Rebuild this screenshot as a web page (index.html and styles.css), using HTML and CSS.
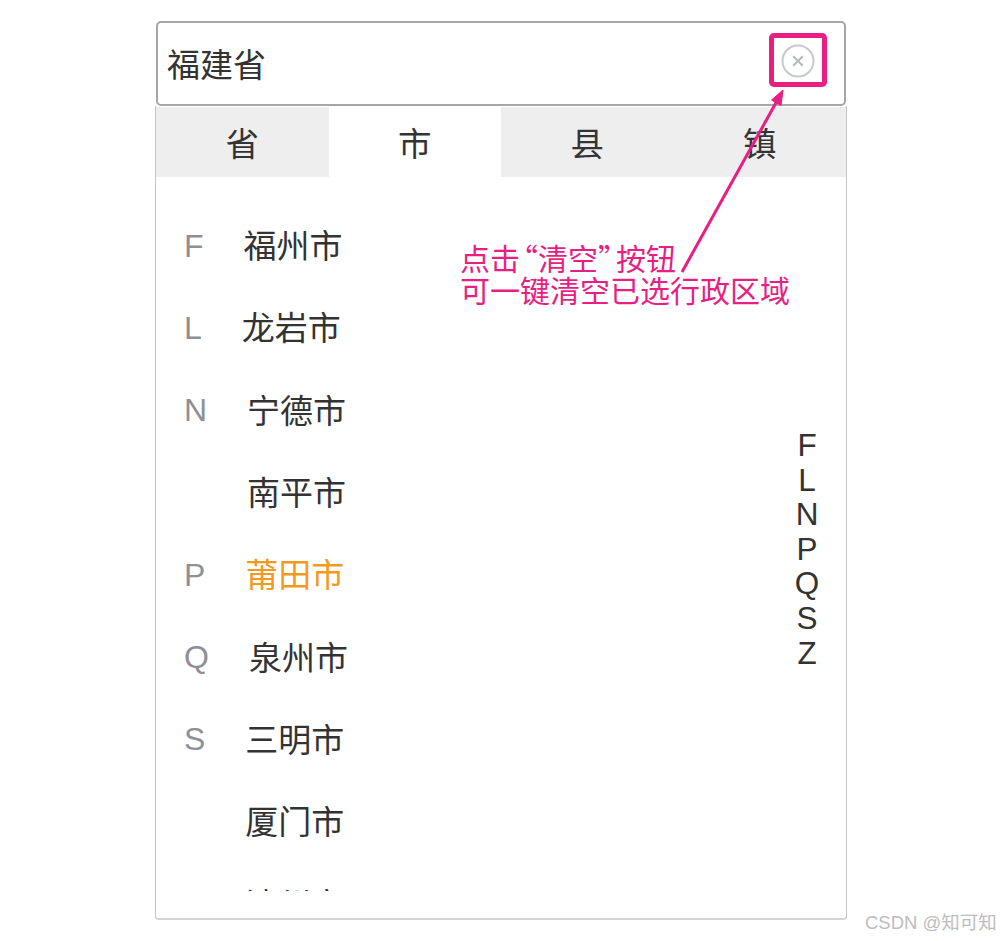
FILE: index.html
```html
<!DOCTYPE html>
<html lang="zh-CN">
<head>
<meta charset="utf-8">
<title>行政区域选择</title>
<link rel="stylesheet" href="styles.css">
</head>
<body>
<main class="stage">
  <div class="field">
    <span class="field-value">福建省</span>
    <svg class="clear-icon" width="36" height="36" viewBox="0 0 36 36" aria-hidden="true">
      <circle cx="18" cy="18" r="15.5" fill="none" stroke="#c6c9d1" stroke-width="2"/>
      <path d="M13.2 13.2 22.8 22.8M22.8 13.2 13.2 22.8" fill="none" stroke="#b4b8c1" stroke-width="2"/>
    </svg>
  </div>
  <section class="panel">
    <div class="tabs">
      <div class="tab">省</div>
      <div class="tab tab-active">市</div>
      <div class="tab">县</div>
      <div class="tab">镇</div>
    </div>
    <div class="list">
      <div class="row"><span class="letter">F</span><span class="city">福州市</span></div>
      <div class="row"><span class="letter">L</span><span class="city">龙岩市</span></div>
      <div class="row"><span class="letter">N</span><span class="city">宁德市</span></div>
      <div class="row"><span class="letter letter-hidden">N</span><span class="city">南平市</span></div>
      <div class="row"><span class="letter">P</span><span class="city city-current">莆田市</span></div>
      <div class="row"><span class="letter">Q</span><span class="city">泉州市</span></div>
      <div class="row"><span class="letter">S</span><span class="city">三明市</span></div>
      <div class="row"><span class="letter letter-hidden">S</span><span class="city">厦门市</span></div>
      <div class="row"><span class="letter letter-hidden">S</span><span class="city">漳州市</span></div>
    </div>
    <div class="index-bar">
      <span>F</span><span>L</span><span>N</span><span>P</span><span>Q</span><span>S</span><span>Z</span>
    </div>
  </section>
  <svg class="callout" width="1000" height="941" viewBox="0 0 1000 941" aria-hidden="true">
    <rect x="771.5" y="35.5" width="53" height="49" rx="2.5" fill="none" stroke="#e91e82" stroke-width="5"/>
    <path d="M682 272 777.5 100" fill="none" stroke="#e91e82" stroke-width="3"/>
    <path d="M783 90 771.5 100 781 105.5 Z" fill="#e91e82" stroke="#e91e82" stroke-width="1"/>
  </svg>
  <p class="note"><span>点击<span class="quote-open">“</span>清空<span class="quote-close">”</span>按钮</span><span>可一键清空已选行政区域</span></p>
  <div class="watermark">CSDN @知可知</div>
</main>
</body>
</html>
```

FILE: styles.css
```css
* { box-sizing: border-box; }
html, body { margin: 0; background: #fff; }
body {
  font-family: "Liberation Sans", "Noto Sans CJK SC", sans-serif;
  color: #333;
}
.stage {
  position: relative;
  width: 1000px;
  height: 941px;
  padding: 21px 153px 0 155px;
  overflow: hidden;
}
.field {
  display: flex;
  align-items: center;
  justify-content: space-between;
  height: 85px;
  margin: 0 1px;
  padding: 0 28px 2px 9px;
  border: 2px solid #a6a6a6;
  border-radius: 5px;
  background: #fff;
  font-size: 33px;
}
.clear-icon { margin-bottom: 3px; }
.panel {
  position: relative;
  height: 814px;
  border: 1px solid #c4c4c4;
  border-top: 0;
  border-bottom: 2px solid #d4d4d4;
  border-radius: 0 0 4px 4px;
  padding-top: 1px;
}
.tabs {
  display: grid;
  grid-template-columns: repeat(4, 1fr);
  height: 70px;
  background: #eee;
}
.tab {
  display: flex;
  align-items: center;
  justify-content: center;
  padding-bottom: 1px;
  font-size: 33.5px;
}
.tab-active { background: #fff; }
.list {
  height: 713.5px;
  padding-top: 28px;
  overflow: hidden;
}
.row {
  display: flex;
  align-items: center;
  height: 82.3px;
  padding-left: 28px;
  font-size: 33px;
}
.letter {
  margin-right: 40px;
  color: #8f8f98;
  font-size: 32px;
}
.letter-hidden { visibility: hidden; }
.city {
  margin-bottom: 4px;
  color: #333;
}
.city-current { color: #f19a1f; }
.index-bar {
  position: absolute;
  top: 322px;
  right: 19px;
  width: 40px;
  display: flex;
  flex-direction: column;
  align-items: center;
  font-size: 31.5px;
  line-height: 34.6px;
  color: #333;
}
.callout {
  position: absolute;
  top: 0;
  left: 0;
}
.note {
  position: absolute;
  top: 241px;
  left: 460px;
  margin: 0;
  display: flex;
  flex-direction: column;
  font-family: "Noto Sans CJK SC", sans-serif;
  font-size: 30px;
  line-height: 32px;
  color: #e91e82;
  white-space: nowrap;
}
.quote-open { margin-left: -12px; }
.quote-close { margin-right: -12px; }
.watermark {
  position: absolute;
  left: 865px;
  top: 912px;
  font-size: 18.5px;
  line-height: 22px;
  color: #bdbdbd;
  white-space: nowrap;
}
```
